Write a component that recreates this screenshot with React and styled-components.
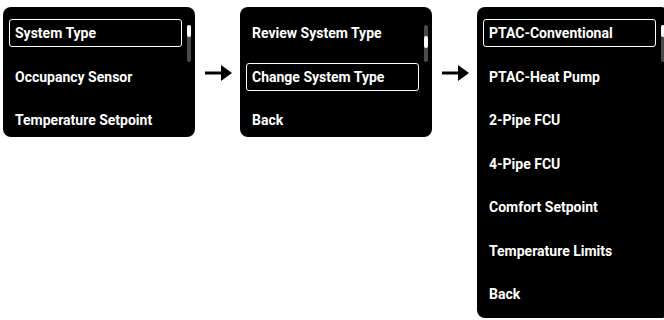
import styled, { createGlobalStyle } from "styled-components";

const GlobalStyle = createGlobalStyle`
	html, body {
		margin: 0;
		padding: 0;
		background: #ffffff;
	}
	body {
		font-family: "Roboto", "Liberation Sans", sans-serif;
		overflow: hidden;
	}
`;

const menus = [
	{
		items: ["System Type", "Occupancy Sensor", "Temperature Setpoint"],
		selected: 0,
		height: 130,
		thumbTop: 0,
	},
	{
		items: ["Review System Type", "Change System Type", "Back"],
		selected: 1,
		height: 130,
		thumbTop: 11,
	},
	{
		items: [
			"PTAC-Conventional",
			"PTAC-Heat Pump",
			"2-Pipe FCU",
			"4-Pipe FCU",
			"Comfort Setpoint",
			"Temperature Limits",
			"Back",
		],
		selected: 0,
		height: 311,
		thumbTop: 0,
	},
];

function Arrow() {
	return (
		<ArrowSlot>
			<svg width="27" height="18" viewBox="0 0 27 18">
				<line x1="0" y1="9" x2="18" y2="9" stroke="#000" strokeWidth="3" />
				<polygon points="16,1 27,9 16,17" fill="#000" />
			</svg>
		</ArrowSlot>
	);
}

function Screen({ menu }) {
	return (
		<Panel $height={menu.height}>
			<List>
				{menu.items.map((item, i) => (
					<Item key={item} $active={i === menu.selected}>
						{item}
					</Item>
				))}
			</List>
			<Track>
				<Thumb $top={menu.thumbTop} />
			</Track>
		</Panel>
	);
}

export default function App() {
	return (
		<>
			<GlobalStyle />
			<Page>
				<Screen menu={menus[0]} />
				<Arrow />
				<Screen menu={menus[1]} />
				<Arrow />
				<Screen menu={menus[2]} />
			</Page>
		</>
	);
}

const Page = styled.div`
	display: flex;
	align-items: flex-start;
	gap: 9px;
	padding: 7px 0 0 3px;
	width: 664px;
	box-sizing: border-box;
	overflow: hidden;
`;

const ArrowSlot = styled.div`
	height: 130px;
	display: flex;
	align-items: center;
	padding-top: 1px;
	margin-left: 1px;
	margin-right: -1px;
	box-sizing: border-box;
`;

const Panel = styled.div`
	position: relative;
	flex-shrink: 0;
	width: 192px;
	height: ${(p) => p.$height}px;
	background: #000000;
	border-radius: 8px;
	overflow: hidden;
	box-sizing: border-box;
	padding: 12px 0 0 6px;
`;

const List = styled.div`
	display: flex;
	flex-direction: column;
	gap: 15.5px;
	width: 173px;
`;

const Item = styled.div`
	height: 28px;
	box-sizing: border-box;
	display: flex;
	align-items: center;
	padding-left: 5px;
	border: 1.5px solid ${(p) => (p.$active ? "#ffffff" : "transparent")};
	border-radius: 3px;
	color: #ffffff;
	font-size: 14px;
	font-weight: 700;
	white-space: nowrap;
`;

const Track = styled.div`
	position: absolute;
	top: 18px;
	left: 184px;
	width: 4px;
	height: 37px;
	border-radius: 2px;
	background: #4a4a4a;
`;

const Thumb = styled.div`
	position: absolute;
	top: ${(p) => p.$top}px;
	left: 0;
	width: 4px;
	height: 12px;
	border-radius: 2px;
	background: #ffffff;
`;
